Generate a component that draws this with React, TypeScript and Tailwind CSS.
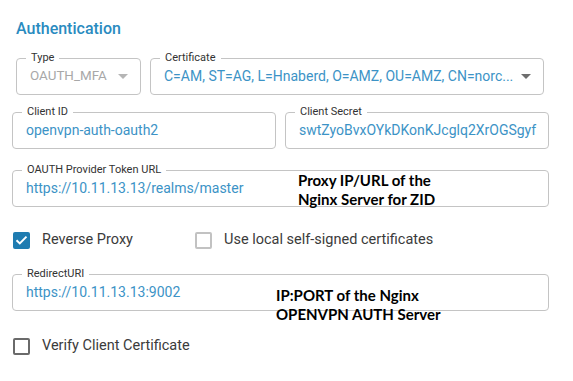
import React from 'react';

const font = { fontFamily: 'Roboto, "Liberation Sans", sans-serif' };

const OutlinedField: React.FC<{
  label: string;
  value: string;
  className?: string;
  textSize?: string;
  muted?: boolean;
  select?: boolean;
  children?: React.ReactNode;
}> = ({ label, value, className = '', textSize = 'text-[14px]', muted, select, children }) => (
  <div className={`relative h-[37px] rounded border border-[#c4c4c4] ${className}`}>
    <span className="absolute -top-[8px] left-[9px] bg-white px-[5px] text-[11px] leading-[14px] text-[#333]">
      {label}
    </span>
    <div className={`flex h-full items-center pl-[13px] ${select ? 'pr-[12px]' : 'pr-[3px]'}`}>
      <span
        className={`min-w-0 flex-1 whitespace-nowrap ${textSize} ${muted ? 'text-[#a8a8a8]' : 'text-[#3c93c6]'}`}
      >
        {value}
      </span>
      {select && (
        <svg width="10" height="5" viewBox="0 0 10 5" className="ml-[9px] shrink-0">
          <path d="M0 0h10L5 5z" fill={muted ? '#b5b5b5' : '#6e6e6e'} />
        </svg>
      )}
    </div>
    {children}
  </div>
);

const Checkbox: React.FC<{ checked?: boolean; label: string; light?: boolean }> = ({ checked, label, light }) => (
  <label className="flex items-center gap-[12px]">
    {checked ? (
      <span className="flex h-[17px] w-[17px] items-center justify-center rounded-[2px] bg-[#1f7cb1]">
        <svg width="13" height="10" viewBox="0 0 13 10">
          <path d="M1.5 5.2l3.3 3.2L11.5 1.6" stroke="#fff" strokeWidth="2" fill="none" />
        </svg>
      </span>
    ) : (
      <span
        className={`h-[17px] w-[17px] rounded-[2px] border-2 ${light ? 'border-[#c2c2c2]' : 'border-[#6a6a6a]'}`}
      />
    )}
    <span className="text-[14.5px] leading-[20px] text-[#3b3b3b]">{label}</span>
  </label>
);

const Note: React.FC<{ lines: string[]; className: string }> = ({ lines, className }) => (
  <div
    className={`absolute whitespace-nowrap text-[15px] font-bold leading-[19px] text-black ${className}`}
    style={{ fontFamily: 'Lato, "Open Sans", sans-serif' }}
  >
    {lines.map((l) => (
      <div key={l}>{l}</div>
    ))}
  </div>
);

export default function App() {
  return (
    <div className="h-[381px] w-[573px] bg-white pl-[12px] pt-[19px]" style={font}>
      <h1 className="pl-[4px] text-[16px] font-medium leading-[20px] text-[#2a8bc0]">Authentication</h1>

      <div className="mt-[19px] flex gap-[9px] pl-[4px]">
        <OutlinedField
          label="Type"
          value="OAUTH_MFA"
          muted
          select
          textSize="text-[13.4px]"
          className="w-[125px]"
        />
        <OutlinedField
          label="Certificate"
          value="C=AM, ST=AG, L=Hnaberd, O=AMZ, OU=AMZ, CN=norc..."
          select
          className="w-[394px]"
        />
      </div>

      <div className="mt-[17px] flex gap-[9px]">
        <OutlinedField label="Client ID" value="openvpn-auth-oauth2" className="w-[264px]" />
        <OutlinedField label="Client Secret" value="swtZyoBvxOYkDKonKJcglq2XrOGSgyf" className="w-[264px]" />
      </div>

      <OutlinedField
        label="OAUTH Provider Token URL"
        value="https://10.11.13.13/realms/master"
        className="mt-[21px] w-[537px]"
      >
        <Note lines={['Proxy IP/URL of the', 'Nginx Server for ZID']} className="left-[285px] top-[0px]" />
      </OutlinedField>

      <div className="mt-[23px] flex items-center pl-[1px]">
        <div className="w-[182px]">
          <Checkbox checked label="Reverse Proxy" />
        </div>
        <Checkbox light label="Use local self-signed certificates" />
      </div>

      <OutlinedField
        label="RedirectURI"
        value="https://10.11.13.13:9002"
        className="mt-[24px] w-[537px]"
      >
        <Note lines={['IP:PORT of the Nginx', 'OPENVPN AUTH Server']} className="left-[263px] top-[11px]" />
      </OutlinedField>

      <div className="mt-[25px] pl-[1px]">
        <Checkbox label="Verify Client Certificate" />
      </div>
    </div>
  );
}
